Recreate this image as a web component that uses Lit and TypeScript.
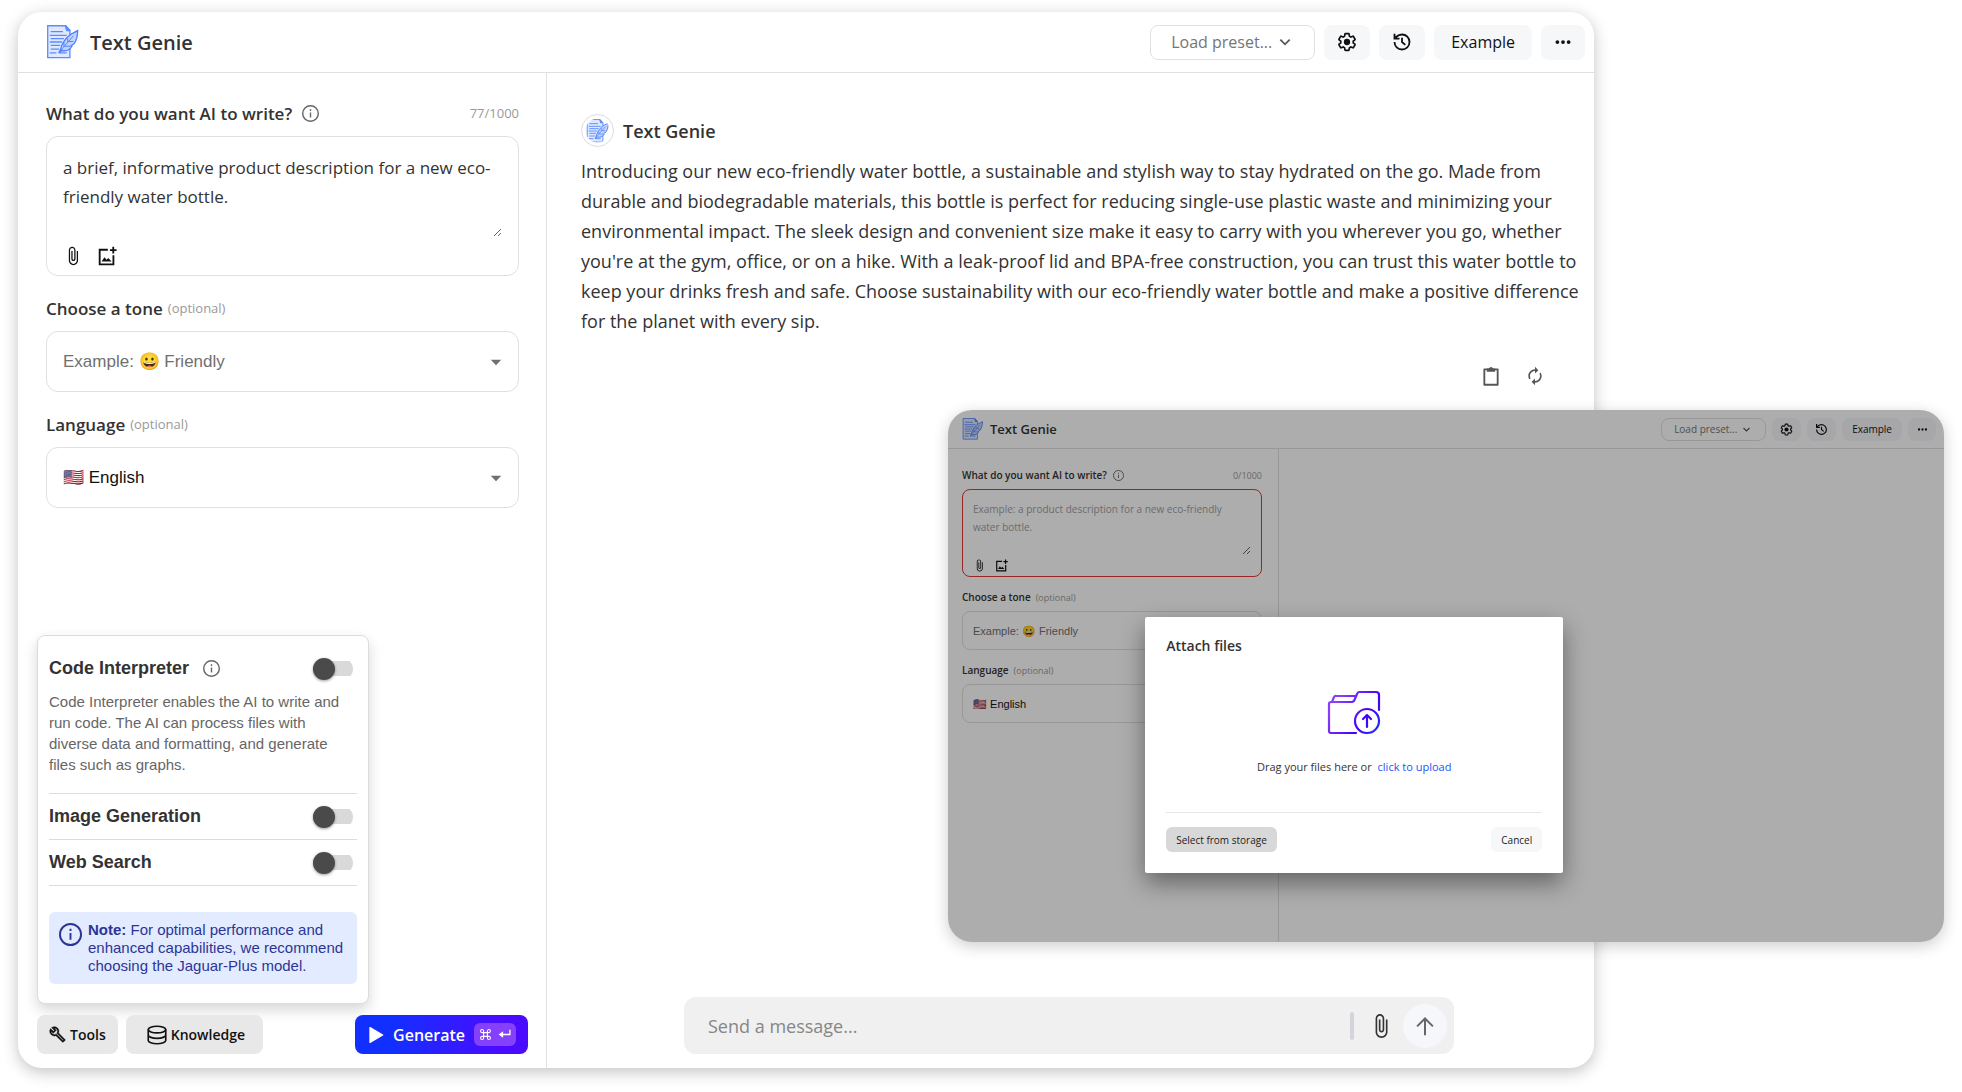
import { LitElement, html, css, svg, nothing } from "lit";
import { customElement, property } from "lit/decorators.js";

const ICONS = {
  gear: svg`<path fill="none" stroke="currentColor" stroke-width="2" d="M19.43 12.98c.04-.32.07-.64.07-.98 0-.34-.03-.66-.07-.98l2.11-1.65c.19-.15.24-.42.12-.64l-2-3.46c-.09-.16-.26-.25-.44-.25-.06 0-.12.01-.17.03l-2.49 1c-.52-.4-1.08-.73-1.69-.98l-.38-2.65C14.46 2.18 14.25 2 14 2h-4c-.25 0-.46.18-.49.42l-.38 2.65c-.61.25-1.17.59-1.69.98l-2.49-1c-.06-.02-.12-.03-.18-.03-.17 0-.34.09-.43.25l-2 3.46c-.13.22-.07.49.12.64l2.11 1.65c-.04.32-.07.65-.07.98 0 .33.03.66.07.98l-2.11 1.65c-.19.15-.24.42-.12.64l2 3.46c.09.16.26.25.44.25.06 0 .12-.01.17-.03l2.49-1c.52.4 1.08.73 1.69.98l.38 2.65c.03.24.24.42.49.42h4c.25 0 .46-.18.49-.42l.38-2.65c.61-.25 1.17-.59 1.69-.98l2.49 1c.06.02.12.03.18.03.17 0 .34-.09.43-.25l2-3.46c.12-.22.07-.49-.12-.64z"/><circle cx="12" cy="12" r="3.800" fill="currentColor"/>`,
  history: svg`<g fill="none" stroke="currentColor" stroke-width="2.2"><path d="M3 12a9 9 0 1 0 9-9 9.75 9.75 0 0 0-6.74 2.74L3 8M3 2v6h6M12 7v5l4 3.5"/></g>`,
  more: svg`<g fill="currentColor"><circle cx="4.500" cy="12" r="2.500"/><circle cx="12" cy="12" r="2.500"/><circle cx="19.500" cy="12" r="2.500"/></g>`,
  chevron: svg`<path fill="none" stroke="currentColor" stroke-width="3" d="M4 8l8 8 8-8"/>`,
  caret: svg`<path fill="currentColor" d="M3 8h18l-9 9.500z"/>`,
  info: svg`<circle cx="12" cy="12" r="11" fill="none" stroke="currentColor" stroke-width="2"/><path fill="currentColor" d="M11 10.5h2v7h-2zM11 6h2v2.4h-2z"/>`,
  clip: svg`<path fill="currentColor" d="M16.5 6v11.5c0 2.21-1.79 4-4 4s-4-1.79-4-4V5c0-1.38 1.12-2.5 2.5-2.5s2.5 1.12 2.5 2.5v10.5c0 .55-.45 1-1 1s-1-.45-1-1V6H10v9.5c0 1.38 1.12 2.5 2.5 2.5s2.5-1.12 2.5-2.5V5c0-2.21-1.79-4-4-4S7 2.79 7 5v12.5c0 3.04 2.46 5.5 5.5 5.5s5.5-2.46 5.5-5.5V6z"/>`,
  addImage: svg`<path fill="none" stroke="currentColor" stroke-width="2.2" d="M13 4.500H3.200v17.500h16.500V11M19.500 1v8M15.500 5h8"/><path fill="currentColor" d="M5.500 18.500l3.500-5 2.500 3 2-2 4 4z"/>`,
  clipboard: svg`<path fill="none" stroke="currentColor" stroke-width="2.200" stroke-linejoin="round" d="M4 4h16v18.500H4z"/><path fill="currentColor" d="M7 3h2.500a2.600 2.600 0 0 1 5 0H17v4H7z"/>`,
  loop: svg`<path fill="currentColor" d="M12 6v3l4-4-4-4v3c-4.42 0-8 3.58-8 8 0 1.57.46 3.03 1.24 4.26L6.700 14.800A5.870 5.870 0 0 1 6 12c0-3.310 2.690-6 6-6zm6.760 1.740L17.300 9.200c.44.84.7 1.790.7 2.800 0 3.310-2.690 6-6 6v-3l-4 4 4 4v-3c4.420 0 8-3.580 8-8 0-1.570-.46-3.030-1.240-4.260z"/>`,
  wrench: svg`<path fill="currentColor" stroke="currentColor" stroke-width=".6" d="M22.610 18.990l-9.080-9.080c.93-2.340.45-5.100-1.440-7C9.790.61 6.210.4 3.660 2.260L7.500 6.110 6.080 7.520 2.250 3.690C.39 6.230.6 9.820 2.900 12.110c1.860 1.860 4.570 2.350 6.890 1.480l9.110 9.110c.39.39 1.020.39 1.410 0l2.300-2.300c.4-.38.4-1.010 0-1.410zm-3 1.600l-9.460-9.460c-.61.45-1.290.72-2 .82-1.360.2-2.790-.21-3.830-1.250C3.370 9.760 2.930 8.500 3 7.260l3.090 3.090 4.240-4.240-3.090-3.090c1.240-.07 2.490.37 3.440 1.310 1.080 1.080 1.490 2.570 1.240 3.960-.12.71-.42 1.370-.88 1.960l9.450 9.450-.88.89z"/>`,
  database: svg`<g fill="none" stroke="currentColor" stroke-width="2"><ellipse cx="12" cy="5.500" rx="10.500" ry="4"/><path d="M1.500 5.500v13c0 2.200 4.700 4 10.500 4s10.500-1.800 10.500-4v-13M1.500 12c0 2.200 4.700 4 10.500 4s10.500-1.800 10.500-4"/></g>`,
  play: svg`<path fill="currentColor" stroke="currentColor" stroke-width="2" stroke-linejoin="round" d="M3 1v22l19-11z"/>`,
  command: svg`<path fill="none" stroke="currentColor" stroke-width="2" d="M8.500 8.500h7v7h-7zM8.500 8.500H5.700a2.800 2.800 0 1 1 2.800-2.800zM15.500 8.500V5.700a2.800 2.800 0 1 1 2.800 2.800zM15.500 15.500h2.800a2.800 2.800 0 1 1-2.800 2.800zM8.500 15.500v2.800a2.800 2.800 0 1 1-2.800-2.800z"/>`,
  enter: svg`<path fill="none" stroke="currentColor" stroke-width="2.400" d="M22 3v9H4"/><path fill="currentColor" d="M9.500 6v12L1 12z"/>`,
  up: svg`<path fill="none" stroke="currentColor" stroke-width="2.400" d="M12 23V3M2.500 12.500L12 3l9.500 9.500"/>`,
};

const icon = (name: keyof typeof ICONS, cls = "") =>
  html`<svg class="icon ${cls}" viewBox="0 0 24 24" aria-hidden="true">${ICONS[name]}</svg>`;

const logoShapes = svg`
  <path fill="#dfe8ff" stroke="#5b8cff" stroke-width="1.400" d="M.8.8h19l4.500 4.800v29H.8z"/>
  <path fill="#5b8cff" d="M18.500.5h2l5 6h-5z"/>
  <path stroke="#5b8cff" stroke-width="1.400" d="M4 7h13M3 11h18M4 14.500h14M3 18h13M4 21.500h10M4 25.500h9M3 29.500h7M13 29.500h8"/>
  <path fill="#c3d3ff" stroke="#4f82fb" stroke-width="1.400" d="M32.500 6c-4 2.500-8 3-11 7-4 4.500-6.500 9-7 13l-2 3.500 3.500-2.500c4.500 1 8-.5 10.500-4.500l-1-.5 3.500-2.500c2-3 3.500-8 3.500-13.500z"/>
  <path fill="none" stroke="#4f82fb" d="M14 27.500l14-16M18 22.500v-4.500M18.500 22.500h6M22 18v-4M23 17.500h5"/>`;

const logo = () => html`<svg class="logo" viewBox="0 0 34 36" aria-hidden="true">${logoShapes}</svg>`;

const shared = css`
  *, *::before, *::after { box-sizing: border-box; }
  .icon { width: 20px; height: 20px; display: block; flex: none; }
  button, select, textarea, input { font: inherit; color: inherit; margin: 0; }
  button { border: 0; padding: 0; background: none; cursor: pointer; display: inline-flex; align-items: center; justify-content: center; white-space: nowrap; }
`;

@customElement("genie-window")
export class GenieWindow extends LitElement {
  @property({ type: Boolean, reflect: true }) compact = false;
  @property() prompt = "";
  @property() placeholder = "";

  static styles = [shared, css`
    :host {
      --header: 61px; --side: 529px; --pad: 28px; --pad-end: 27px; --title: 20px; --label: 17px; --text: 17px; --drop: 17px; --small: 13px;
      --line: 29px; --box: 61px; --radius: 12px; --inset: 16px; --ctl: 35px; --ctl-w: 46px; --more-w: 44px; --ctl-gap: 9px;
      --ctl-text: 16px; --row: 24px; --row-gap: 11px; --logo: 34px; --logo-gap: 10px; --i: 20px; --info: 17px;
      --field-gap: 20px; --top: 28px; --caret: 14px; --area: 84px; --area-gap: 9px; --tool-gap: 14px;
      --preset: 165px; --ctl-pad: 17px; --preset-pad: 20px; --bar: 9px;
      --edge: #e0e0e0; --editor-edge: #e0e0e0;
      display: flex; flex-direction: column; position: relative; overflow: hidden;
      background: #fff; color: #333; border-radius: 24px; font-family: "Open Sans", sans-serif;
    }
    :host([compact]) {
      --header: 39px; --side: 331px; --pad: 14px; --pad-end: 16px; --title: 13px; --label: 10px; --text: 10px; --drop: 11px; --small: 9px;
      --line: 18px; --box: 39px; --radius: 8px; --inset: 10px; --ctl: 23px; --ctl-w: 29px; --more-w: 28px; --ctl-gap: 6px;
      --ctl-text: 10px; --row: 16px; --row-gap: 6px; --logo: 22px; --logo-gap: 6px; --i: 13px; --info: 11px;
      --field-gap: 12px; --top: 18px; --caret: 9px; --area: 55px; --area-gap: 4px; --tool-gap: 9px;
      --preset: 105px; --ctl-pad: 10px; --preset-pad: 12px; --bar: 8px;
      --editor-edge: #e53935;
    }
    header { flex: none; height: var(--header); padding: 0 var(--bar) 0 var(--pad); border-bottom: 1px solid var(--edge); display: flex; align-items: center; }
    .logo { width: var(--logo); height: var(--logo); margin-right: var(--logo-gap); }
    h1 { flex: 1; margin: 0; font-size: var(--title); font-weight: 600; }
    .controls { display: flex; gap: var(--ctl-gap); font-size: var(--ctl-text); color: #111; }
    .controls button { height: var(--ctl); width: var(--ctl-w); border-radius: 8px; background: #f6f7f9; }
    .controls .wide { width: auto; padding: 0 var(--ctl-pad); }
    .controls .more { width: var(--more-w); }
    .controls .icon { width: var(--i); height: var(--i); }
    .controls .more .icon { width: calc(var(--i) - 2px); }
    .pick { display: grid; align-items: center; }
    .pick > * { grid-area: 1 / 1; }
    .pick .icon { justify-self: end; pointer-events: none; color: #707070; width: var(--caret); height: var(--caret); margin-right: var(--inset); }
    select { appearance: none; width: 100%; background: #fff; border: 1px solid var(--edge); border-radius: var(--radius); }
    .preset { width: var(--preset); color: #757575; }
    .preset select { height: var(--ctl); padding: 0 0 0 var(--preset-pad); border-radius: 8px; }
    .preset .icon { margin-right: calc(var(--preset-pad) + 3px); color: #555; }
    .body { flex: 1; display: flex; }
    .side { flex: none; width: var(--side); border-right: 1px solid var(--edge); padding: var(--top) 0 0; display: flex; flex-direction: column; }
    .form { padding: 0 var(--pad-end) 0 var(--pad); display: grid; gap: var(--field-gap); }
    .field { display: grid; gap: var(--row-gap); }
    .row { display: flex; align-items: center; height: var(--row); }
    .row label { font-weight: 600; font-size: var(--label); }
    .row .info { color: #666; margin-left: var(--logo-gap); }
    .row .info .icon { width: var(--info); height: var(--info); }
    .note { font-size: var(--small); color: #999; margin-left: 5px; }
    .count { font-size: var(--small); color: #999; margin-left: auto; }
    .editor { border: 1px solid var(--editor-edge); border-radius: var(--radius); padding: var(--inset) var(--inset) var(--area-gap); display: grid; gap: var(--area-gap); }
    textarea { display: block; width: 100%; height: var(--area); padding: 0; border: 0; outline: 0; resize: vertical; overflow: hidden; background: none; font-size: var(--text); line-height: var(--line); }
    textarea::placeholder { color: #a0a0a0; opacity: 1; }
    .tools { display: flex; gap: var(--tool-gap); color: #111; }
    .tools .icon { width: var(--i); height: var(--i); }
    .drop select { height: var(--box); padding: 0 var(--inset); font: var(--drop) "Liberation Sans", Arial, sans-serif; color: #111; }
    .drop .hint { color: #707070; }
    main { flex: 1; min-width: 0; display: flex; flex-direction: column; }
  `];

  render() {
    return html`
      <header>
        ${logo()}
        <h1>Text Genie</h1>
        <div class="controls">
          <div class="pick preset">
            <select aria-label="Load preset"><option>Load preset...</option></select>
            ${icon("chevron")}
          </div>
          <button aria-label="Settings">${icon("gear")}</button>
          <button aria-label="History">${icon("history")}</button>
          <button class="wide">Example</button>
          <button class="more" aria-label="More">${icon("more")}</button>
        </div>
      </header>
      <div class="body">
        <section class="side">
          <div class="form">
            <div class="field">
              <div class="row">
                <label for="prompt">What do you want AI to write?</label>
                <button class="info" aria-label="About the prompt">${icon("info")}</button>
                <span class="count">${this.prompt.length}/1000</span>
              </div>
              <div class="editor">
                <textarea id="prompt" .value=${this.prompt} placeholder=${this.placeholder || nothing}></textarea>
                <div class="tools">
                  <button aria-label="Attach file">${icon("clip")}</button>
                  <button aria-label="Add image">${icon("addImage")}</button>
                </div>
              </div>
            </div>
            <div class="field">
              <div class="row"><label for="tone">Choose a tone</label><span class="note">(optional)</span></div>
              <div class="pick drop">
                <select id="tone" class="hint"><option>Example: 😀 Friendly</option></select>
                ${icon("caret")}
              </div>
            </div>
            <div class="field">
              <div class="row"><label for="language">Language</label><span class="note">(optional)</span></div>
              <div class="pick drop">
                <select id="language"><option>🇺🇸 English</option></select>
                ${icon("caret")}
              </div>
            </div>
          </div>
          <slot name="side"></slot>
        </section>
        <main><slot></slot></main>
      </div>
      <slot name="overlay"></slot>
    `;
  }
}

@customElement("tools-panel")
export class ToolsPanel extends LitElement {
  static styles = [shared, css`
    :host { display: block; background: #fff; border: 1px solid #dcdcdc; border-radius: 8px; padding: 10px 11px 19px; box-shadow: 0 6px 14px rgba(0,0,0,.16); font-family: "Liberation Sans", Arial, sans-serif; }
    .item { display: flex; align-items: center; height: 45px; }
    label { font-weight: 700; font-size: 18px; color: #333; }
    .info { margin-left: 14px; color: #666; }
    .info .icon { width: 17px; height: 17px; }
    input { appearance: none; margin-left: auto; margin-right: 4px; width: 40px; height: 22px; display: flex; align-items: center; cursor: pointer; background: linear-gradient(#d9d9d9, #d9d9d9) center / 40px 15px no-repeat; border-radius: 11px; }
    input::before { content: ""; width: 22px; height: 22px; border-radius: 50%; background: #4a4a4a; box-shadow: 0 1px 3px rgba(0,0,0,.4); }
    input:checked::before { margin-left: auto; }
    p { margin: 0; font-size: 15px; line-height: 21px; color: #666; padding: 0 0 18px; }
    hr { border: 0; border-top: 1px solid #dcdcdc; margin: 0; }
    .tip { display: flex; gap: 6px; margin-top: 26px; padding: 9px 4px 9px 10px; border-radius: 6px; background: #e2ebff; color: #2c3596; font-size: 15px; line-height: 18px; }
    .tip .icon { width: 23px; height: 23px; margin-top: 2px; }
  `];

  render() {
    return html`
      <div class="item">
        <label for="code">Code Interpreter</label>
        <button class="info" aria-label="About Code Interpreter">${icon("info")}</button>
        <input id="code" type="checkbox" role="switch">
      </div>
      <p>Code Interpreter enables the AI to write and run code. The AI can process files with diverse data and formatting, and generate files such as graphs.</p>
      <hr>
      <div class="item"><label for="image">Image Generation</label><input id="image" type="checkbox" role="switch"></div>
      <hr>
      <div class="item"><label for="web">Web Search</label><input id="web" type="checkbox" role="switch"></div>
      <hr>
      <div class="tip">${icon("info")}<div><b>Note:</b> For optimal performance and enhanced capabilities, we recommend choosing the Jaguar-Plus model.</div></div>
    `;
  }
}

@customElement("attach-dialog")
export class AttachDialog extends LitElement {
  static styles = [shared, css`
    :host { display: block; background: #fff; border-radius: 2px; padding: 19px 21px 21px; color: #333; font-family: "Open Sans", sans-serif; font-size: 11px; box-shadow: 0 10px 24px rgba(0,0,0,.42); }
    h2 { margin: 0; font-size: 14px; line-height: 20px; font-weight: 600; }
    .drop { display: grid; justify-items: center; gap: 23px; padding: 34px 0 37px; border-bottom: 1px solid #e6e6e6; }
    .drop svg { width: 54px; height: 46px; }
    p { margin: 0; line-height: 16px; }
    a { color: #2156f5; text-decoration: none; margin-left: 3px; }
    footer { display: flex; justify-content: space-between; margin-top: 14px; font-size: 10px; }
    footer button { height: 25px; padding: 0 10px; border-radius: 6px; background: #f6f7f9; color: #222; }
    footer .main { background: #d8d8d8; }
  `];

  render() {
    return html`
      <section role="dialog" aria-label="Attach files">
        <h2>Attach files</h2>
        <div class="drop">
          <svg viewBox="0 0 54 46" aria-hidden="true">
            <defs><linearGradient id="ink" gradientUnits="userSpaceOnUse" x1="4" y1="10" x2="50" y2="40"><stop offset=".1" stop-color="#8a3dfa"/><stop offset=".7" stop-color="#4700f5"/><stop offset="1" stop-color="#1f2bff"/></linearGradient></defs>
            <g fill="none" stroke="url(#ink)" stroke-width="2.200" stroke-linecap="round" stroke-linejoin="round">
              <path d="M29 43H4a2 2 0 0 1-2-2V14a2 2 0 0 1 2-2h21l2-1 3-7a3 3 0 0 1 2-2h17a3 3 0 0 1 3 3v15"/>
              <path d="M5 12l2-5a2 2 0 0 1 2-1h20"/>
              <circle cx="40" cy="31" r="12"/>
              <path d="M40 37V25M36 29l4-4 4 4"/>
            </g>
          </svg>
          <p>Drag your files here or <a href="#upload">click to upload</a></p>
        </div>
        <footer><button class="main">Select from storage</button><button>Cancel</button></footer>
      </section>
    `;
  }
}

@customElement("app-root")
export class AppRoot extends LitElement {
  static styles = [shared, css`
    :host { display: grid; grid-template-columns: 930fr 646fr 350fr; padding: 12px 18px 24px; min-height: 100vh; background: #fff; box-sizing: border-box; font-family: "Open Sans", sans-serif; color: #333; }
    .workspace { grid-area: 1 / 1 / 2 / 3; box-shadow: 0 4px 16px rgba(0,0,0,.24); }
    .preview { grid-area: 1 / 2 / 2 / 4; align-self: start; margin-top: 398px; min-height: 532px; box-shadow: 0 4px 16px rgba(0,0,0,.2); z-index: 1; }
    .dock { margin-top: auto; padding: 12px 18px 14px 19px; display: grid; gap: 11px; }
    .dock tools-panel { width: 332px; }
    .actions { display: flex; gap: 8px; font-size: 14px; font-weight: 600; color: #111; }
    .actions button { height: 39px; border-radius: 8px; background: #e8e8e8; padding: 0 12px; gap: 4px; }
    .actions .icon { width: 17px; height: 17px; }
    .actions .data { padding: 0 18px 0 21px; }
    .actions .data .icon { width: 20px; height: 20px; }
    .actions .run { margin-left: auto; padding: 0 12px 0 13px; gap: 9px; font-size: 16px; color: #fff; background: linear-gradient(90deg, #1130ff 20%, #4b0bff 85%); }
    .actions .run .icon { width: 16px; height: 16px; }
    .keys { display: flex; gap: 6px; align-items: center; height: 23px; padding: 0 5px; border-radius: 6px; background: #8440fb; }
    .actions .run .keys .icon { width: 13px; height: 13px; }
    .chat { flex: 1; display: flex; flex-direction: column; padding: 41px 12px 14px 34px; }
    .who { display: flex; align-items: center; gap: 9px; }
    .avatar { width: 33px; height: 33px; border: 1px solid #dcdcdc; border-radius: 50%; display: grid; place-items: center; }
    .avatar .logo { width: 24px; height: 24px; clip-path: circle(50%); }
    h2 { margin: 0; font-size: 18px; font-weight: 600; line-height: 24px; }
    .answer { margin: 9px 0 0; font-size: 18px; line-height: 30px; }
    .acts { display: flex; justify-content: flex-end; gap: 24px; margin: 30px 37px 0 0; color: #555; }
    .acts .icon { width: 20px; height: 20px; }
    .composer { margin: auto 0 0 103px; width: 770px; max-width: 100%; height: 57px; background: #f0f0f0; border-radius: 12px; display: flex; align-items: center; padding: 0 7px 0 24px; }
    .composer input { flex: 1; min-width: 0; border: 0; outline: 0; background: none; padding: 0; font-size: 18px; }
    .composer input::placeholder { color: #868686; opacity: 1; }
    .bar { width: 4px; height: 28px; border-radius: 2px; background: #d4d4da; margin-right: 14px; }
    .composer .clip { width: 26px; height: 26px; }
    .composer .clip-btn { margin-right: 9px; color: #333; }
    .send { width: 44px; height: 44px; border-radius: 50%; background: #f6f7fb; color: #666; }
    .shade { position: absolute; inset: 0; background: rgba(0,0,0,.32); }
    .modal { position: absolute; top: 207px; left: 19.8%; width: 418px; }
  `];

  render() {
    return html`
      <genie-window class="workspace" .prompt=${"a brief, informative product description for a new eco-friendly water bottle."}>
        <div class="dock" slot="side">
          <tools-panel></tools-panel>
          <div class="actions">
            <button>${icon("wrench")}Tools</button>
            <button class="data">${icon("database")}Knowledge</button>
            <button class="run">${icon("play")}Generate<span class="keys">${icon("command")}${icon("enter")}</span></button>
          </div>
        </div>
        <div class="chat">
          <div class="who"><span class="avatar">${logo()}</span><h2>Text Genie</h2></div>
          <p class="answer">Introducing our new eco-friendly water bottle, a sustainable and stylish way to stay hydrated on the go. Made from durable and biodegradable materials, this bottle is perfect for reducing single-use plastic waste and minimizing your environmental impact. The sleek design and convenient size make it easy to carry with you wherever you go, whether you're at the gym, office, or on a hike. With a leak-proof lid and BPA-free construction, you can trust this water bottle to keep your drinks fresh and safe. Choose sustainability with our eco-friendly water bottle and make a positive difference for the planet with every sip.</p>
          <div class="acts">
            <button aria-label="Copy">${icon("clipboard")}</button>
            <button aria-label="Regenerate">${icon("loop")}</button>
          </div>
          <div class="composer">
            <input type="text" aria-label="Message" placeholder="Send a message...">
            <span class="bar"></span>
            <button class="clip-btn" aria-label="Attach file">${icon("clip", "clip")}</button>
            <button class="send" aria-label="Send">${icon("up")}</button>
          </div>
        </div>
      </genie-window>
      <genie-window class="preview" compact placeholder="Example: a product description for a new eco-friendly water bottle.">
        <div slot="overlay" class="shade"></div>
        <attach-dialog slot="overlay" class="modal"></attach-dialog>
      </genie-window>
    `;
  }
}
